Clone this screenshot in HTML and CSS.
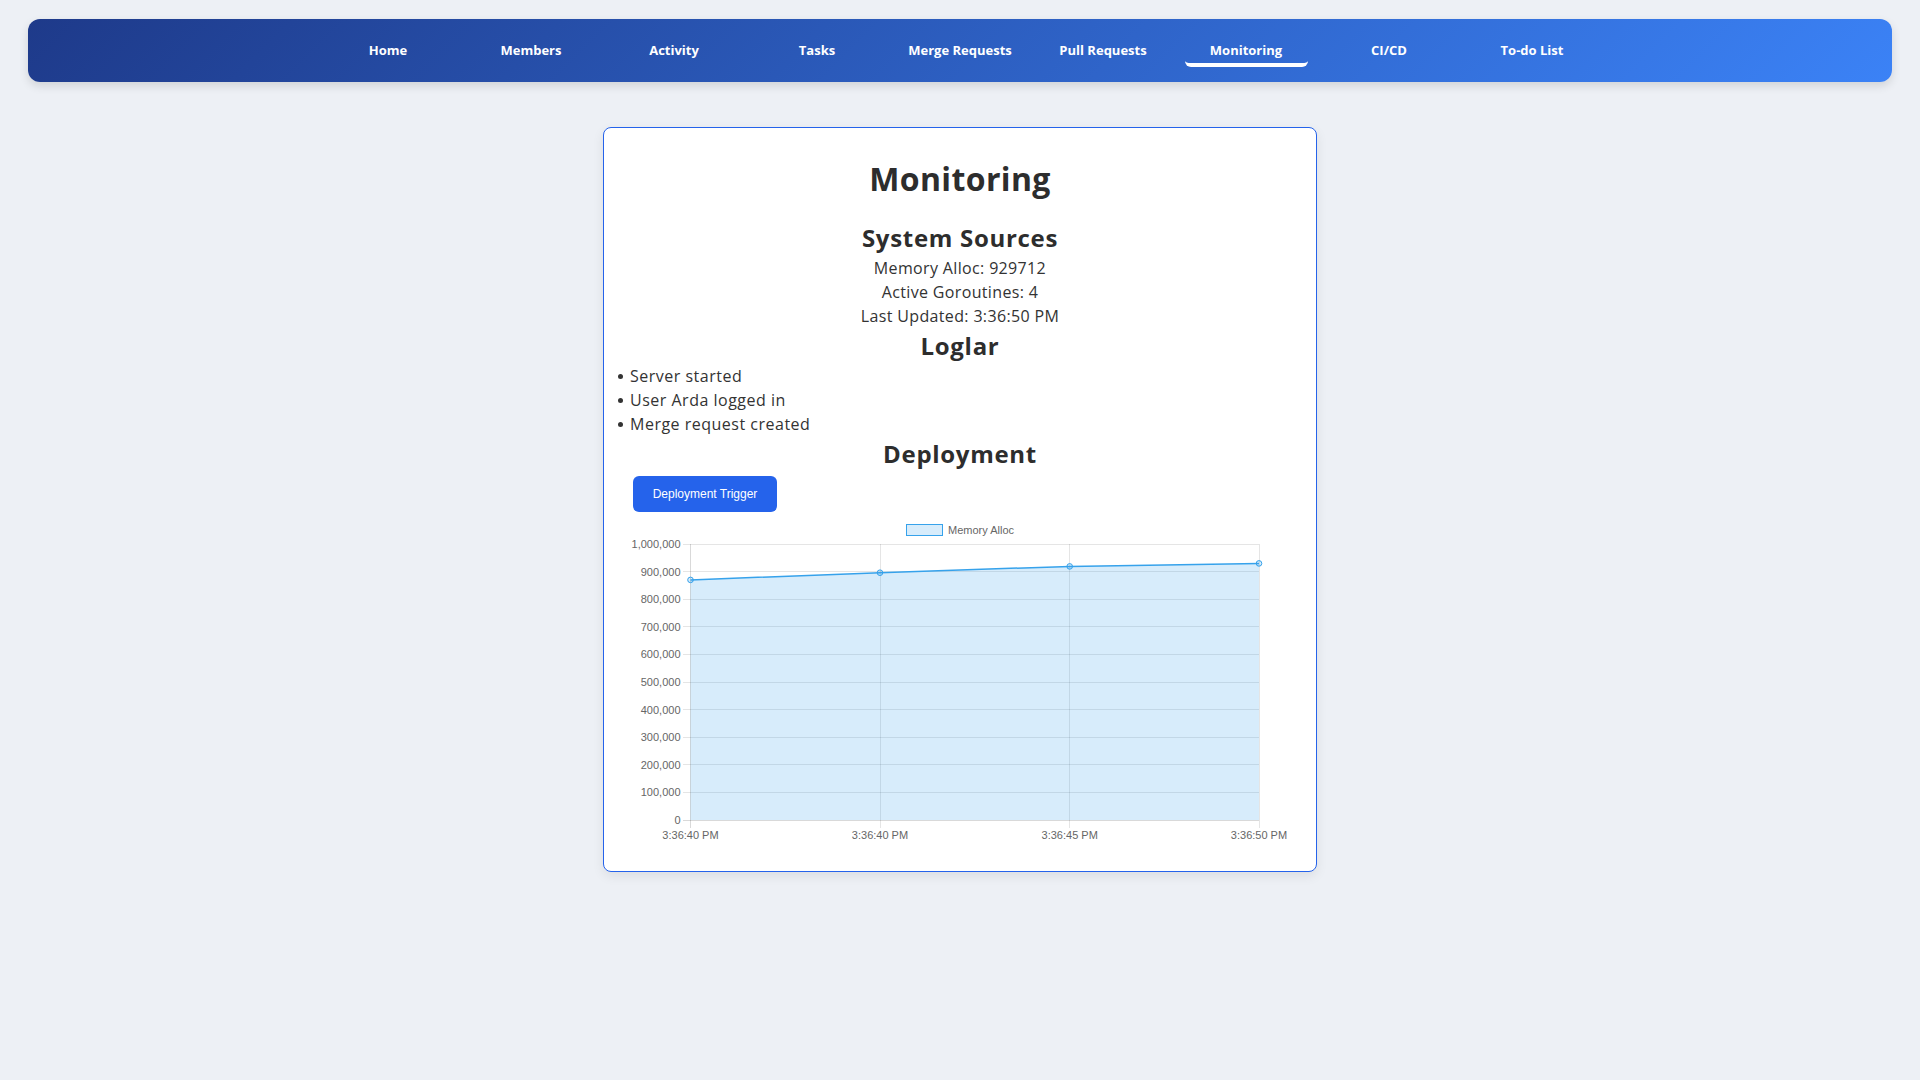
FILE: index.html
```html
<!DOCTYPE html>
<html lang="en">
<head>
<meta charset="utf-8">
<title>Monitoring</title>
<link rel="stylesheet" href="styles.css">
</head>
<body>
<nav class="navbar">
  <a class="nav-link" href="#">Home</a>
  <a class="nav-link" href="#">Members</a>
  <a class="nav-link" href="#">Activity</a>
  <a class="nav-link" href="#">Tasks</a>
  <a class="nav-link" href="#">Merge Requests</a>
  <a class="nav-link" href="#">Pull Requests</a>
  <a class="nav-link active" href="#">Monitoring</a>
  <a class="nav-link" href="#">CI/CD</a>
  <a class="nav-link" href="#">To-do List</a>
</nav>

<main class="card">
  <h1 class="title">Monitoring</h1>
  <h2 class="section-title first">System Sources</h2>
  <p class="stat">Memory Alloc: 929712</p>
  <p class="stat">Active Goroutines: 4</p>
  <p class="stat">Last Updated: 3:36:50 PM</p>
  <h2 class="section-title">Loglar</h2>
  <ul class="logs">
    <li>Server started</li>
    <li>User Arda logged in</li>
    <li>Merge request created</li>
  </ul>
  <h2 class="section-title">Deployment</h2>
  <div class="deploy">
    <button class="btn" type="button">Deployment Trigger</button>
    <div class="chart">
      <svg class="chart-svg" width="654" height="327" viewBox="0 0 654 327">
        <!-- legend -->
        <rect x="273.5" y="10.5" width="36" height="11" fill="rgba(54,162,235,0.2)" stroke="#36a2eb" stroke-width="1"/>
        <text class="legend-text" x="315" y="16">Memory Alloc</text>

        <!-- grid lines -->
        <g class="grid" shape-rendering="crispEdges">
          <line x1="50" y1="30" x2="626" y2="30"/>
          <line x1="50" y1="57.6" x2="626" y2="57.6"/>
          <line x1="50" y1="85.2" x2="626" y2="85.2"/>
          <line x1="50" y1="112.8" x2="626" y2="112.8"/>
          <line x1="50" y1="140.4" x2="626" y2="140.4"/>
          <line x1="50" y1="168" x2="626" y2="168"/>
          <line x1="50" y1="195.6" x2="626" y2="195.6"/>
          <line x1="50" y1="223.2" x2="626" y2="223.2"/>
          <line x1="50" y1="250.8" x2="626" y2="250.8"/>
          <line x1="50" y1="278.4" x2="626" y2="278.4"/>
          <line x1="50" y1="306" x2="626" y2="306" class="axis"/>
          <line x1="57.5" y1="30" x2="57.5" y2="314" class="axis"/>
          <line x1="247" y1="30" x2="247" y2="314"/>
          <line x1="436.7" y1="30" x2="436.7" y2="314"/>
          <line x1="626" y1="30" x2="626" y2="314"/>
        </g>

        <!-- y labels -->
        <g class="tick-label y-labels">
          <text x="47.5" y="30">1,000,000</text>
          <text x="47.5" y="57.6">900,000</text>
          <text x="47.5" y="85.2">800,000</text>
          <text x="47.5" y="112.8">700,000</text>
          <text x="47.5" y="140.4">600,000</text>
          <text x="47.5" y="168">500,000</text>
          <text x="47.5" y="195.6">400,000</text>
          <text x="47.5" y="223.2">300,000</text>
          <text x="47.5" y="250.8">200,000</text>
          <text x="47.5" y="278.4">100,000</text>
          <text x="47.5" y="306">0</text>
        </g>

        <!-- x labels -->
        <g class="tick-label x-labels">
          <text x="57.5" y="321">3:36:40 PM</text>
          <text x="247" y="321">3:36:40 PM</text>
          <text x="436.7" y="321">3:36:45 PM</text>
          <text x="626" y="321">3:36:50 PM</text>
        </g>

        <!-- dataset -->
        <polygon points="57.5,65.9 247,58.7 436.7,52.4 626,49.4 626,306 57.5,306" fill="rgba(54,162,235,0.2)"/>
        <polyline points="57.5,65.9 247,58.7 436.7,52.4 626,49.4" fill="none" stroke="#36a2eb" stroke-width="1.5"/>
        <g fill="rgba(54,162,235,0.2)" stroke="#36a2eb" stroke-width="1">
          <circle cx="57.5" cy="65.9" r="2.8"/>
          <circle cx="247" cy="58.7" r="2.8"/>
          <circle cx="436.7" cy="52.4" r="2.8"/>
          <circle cx="626" cy="49.4" r="2.8"/>
        </g>
      </svg>
    </div>
  </div>
</main>
</body>
</html>
```

FILE: styles.css
```css
* {
  box-sizing: border-box;
}

html, body {
  margin: 0;
  padding: 0;
}

body {
  background: #edf0f5;
  font-family: "Open Sans", "Noto Sans", sans-serif;
  color: #333;
  min-height: 1080px;
  padding-top: 19px;
}

.navbar {
  margin: 0 28px;
  height: 63px;
  border-radius: 12px;
  background: linear-gradient(135deg, #1e3a8a 0%, #3b82f6 100%);
  box-shadow: 0 4px 10px rgba(0, 0, 0, 0.12);
  display: flex;
  justify-content: center;
  align-items: center;
  gap: 20px;
}

.nav-link {
  display: block;
  width: 123px;
  padding: 5px 0 3px;
  line-height: 20px;
  text-align: center;
  color: #fff;
  text-decoration: none;
  font-size: 13px;
  font-weight: 700;
  border-bottom: 4px solid transparent;
  border-radius: 6px;
}

.nav-link.active {
  border-bottom-color: #fff;
}

.card {
  width: 714px;
  margin: 45px auto 0;
  background: #fff;
  border: 1px solid #2563eb;
  border-radius: 8px;
  padding: 10px 10px 30px;
  box-shadow: 0 4px 12px rgba(0, 0, 0, 0.08);
}

.title {
  margin: 17px 0 0;
  font-size: 32px;
  line-height: 48px;
  font-weight: 700;
  letter-spacing: 0.35px;
  text-align: center;
  color: #2d2d2d;
}

.section-title {
  margin: 0;
  font-size: 24px;
  line-height: 36px;
  font-weight: 700;
  letter-spacing: 0.7px;
  text-align: center;
  color: #2d2d2d;
}

.section-title.first {
  margin-top: 17px;
}

.stat {
  margin: 0;
  font-size: 16px;
  line-height: 24px;
  letter-spacing: 0.35px;
  text-align: center;
}

.logs {
  list-style: none;
  margin: 0;
  padding: 0 0 0 4px;
}

.logs li {
  position: relative;
  font-size: 16px;
  line-height: 24px;
  letter-spacing: 0.5px;
  padding-left: 12px;
}

.logs li::before {
  content: "";
  position: absolute;
  left: 0;
  top: 10px;
  width: 5px;
  height: 5px;
  border-radius: 50%;
  background: #333;
}

.deploy {
  padding: 0 19px;
}

.btn {
  display: block;
  margin-top: 4px;
  width: 144px;
  height: 36px;
  border: none;
  border-radius: 6px;
  background: #2563eb;
  color: #fff;
  font-family: "Liberation Sans", Arial, sans-serif;
  font-size: 12px;
  padding: 0;
  cursor: pointer;
}

.chart {
  margin-top: 2px;
  width: 654px;
  height: 327px;
}

.chart-svg {
  display: block;
  overflow: visible;
}

.grid line {
  stroke: rgba(0, 0, 0, 0.1);
  stroke-width: 1;
}

.grid line.axis {
  stroke: rgba(0, 0, 0, 0.15);
}

.tick-label text,
.legend-text {
  font-family: "Liberation Sans", Arial, sans-serif;
  font-size: 11px;
  fill: #666;
  dominant-baseline: central;
}

.y-labels text {
  text-anchor: end;
}

.x-labels text {
  text-anchor: middle;
}
```
